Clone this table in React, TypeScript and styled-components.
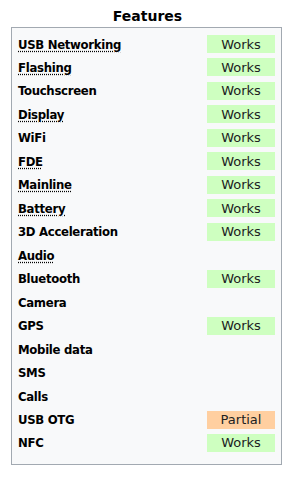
import React from "react";
import styled, { createGlobalStyle } from "styled-components";

const Global = createGlobalStyle`
  html, body { margin: 0; padding: 0; background: #ffffff; }
  body { font-family: "DejaVu Sans", Verdana, sans-serif; color: #202122; }
`;

const Page = styled.div`
  width: 295px;
  display: flex;
  flex-direction: column;
`;

const Title = styled.div`
  height: 27px;
  display: flex;
  align-items: center;
  justify-content: center;
  padding-top: 4px;
  box-sizing: border-box;
  font-weight: bold;
  font-size: 14px;
  color: #000;
`;

const Box = styled.div`
  margin-left: 11px;
  width: 271px;
  box-sizing: border-box;
  border: 1px solid #a2a9b1;
  background: #f8f9fa;
  padding: 7px 6px 12px 6px;
  display: grid;
  grid-template-columns: 1fr 68px;
  grid-auto-rows: 18px;
  row-gap: 5.47px;
  align-items: center;
`;

const Label = styled.span<{ $abbr?: boolean }>`
  font-family: "DejaVu Sans Condensed", "DejaVu Sans", sans-serif;
  font-stretch: condensed;
  font-size: 13px;
  font-weight: bold;
  color: #000;
  letter-spacing: -0.3px;
  justify-self: start;
  line-height: 18px;
  padding-top: 1px;
  text-decoration: ${(p) => (p.$abbr ? "underline dotted" : "none")};
  text-underline-offset: 2px;
`;

const Status = styled.span<{ $kind?: "works" | "partial" }>`
  height: 18px;
  display: flex;
  align-items: center;
  justify-content: center;
  font-size: 13px;
  color: #202122;
  background: ${(p) =>
    p.$kind === "works" ? "#ceffc0" : p.$kind === "partial" ? "#ffcfa0" : "transparent"};
`;

type Feature = { name: string; abbr?: boolean; status?: "works" | "partial" };

const features: Feature[] = [
  { name: "USB Networking", abbr: true, status: "works" },
  { name: "Flashing", abbr: true, status: "works" },
  { name: "Touchscreen", status: "works" },
  { name: "Display", abbr: true, status: "works" },
  { name: "WiFi", status: "works" },
  { name: "FDE", abbr: true, status: "works" },
  { name: "Mainline", abbr: true, status: "works" },
  { name: "Battery", abbr: true, status: "works" },
  { name: "3D Acceleration", status: "works" },
  { name: "Audio", abbr: true },
  { name: "Bluetooth", status: "works" },
  { name: "Camera" },
  { name: "GPS", status: "works" },
  { name: "Mobile data" },
  { name: "SMS" },
  { name: "Calls" },
  { name: "USB OTG", status: "partial" },
  { name: "NFC", status: "works" },
];

export default function App() {
  return (
    <>
      <Global />
      <Page>
        <Title>Features</Title>
        <Box>
          {features.map((f) => (
            <React.Fragment key={f.name}>
              <Label $abbr={f.abbr}>{f.name}</Label>
              <Status $kind={f.status}>
                {f.status === "works" ? "Works" : f.status === "partial" ? "Partial" : ""}
              </Status>
            </React.Fragment>
          ))}
        </Box>
      </Page>
    </>
  );
}
